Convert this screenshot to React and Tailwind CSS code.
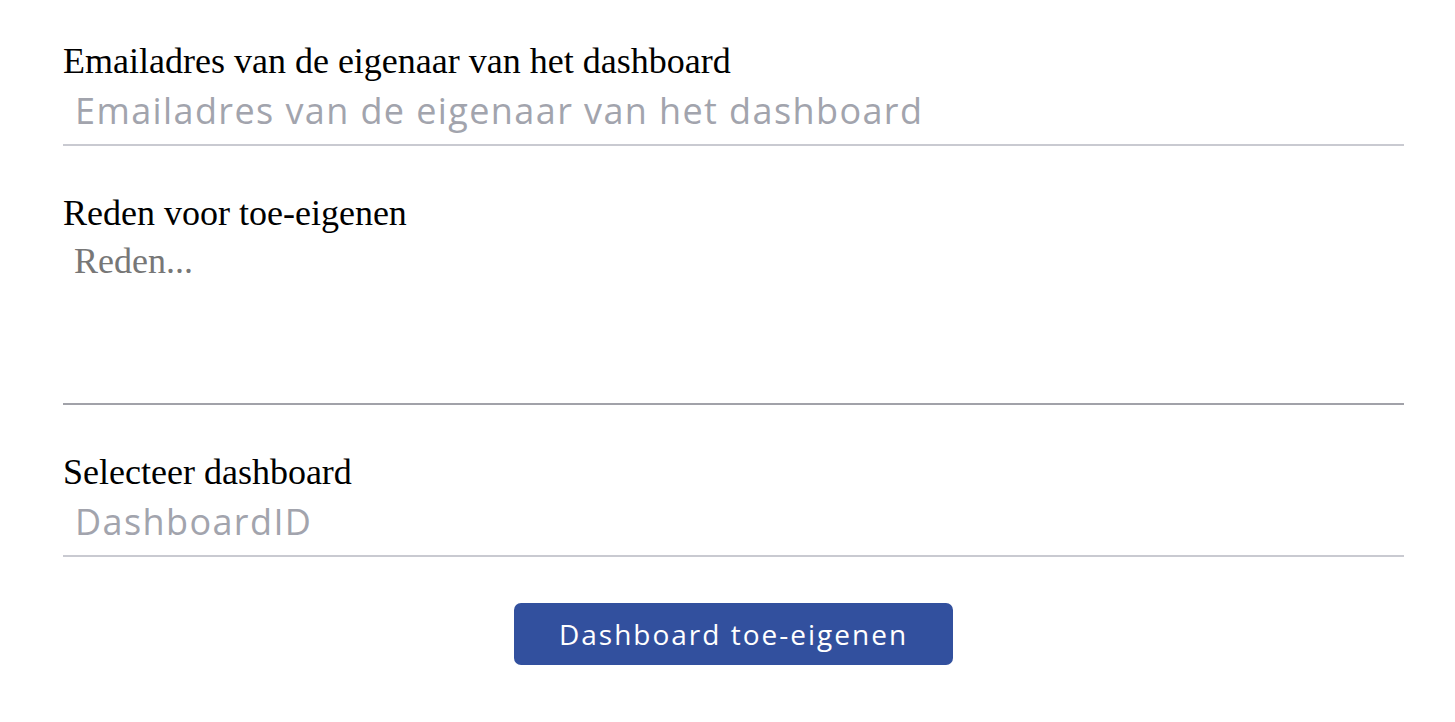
import React from "react";

function Field({ label, children, className = "" }) {
  return (
    <div className={className}>
      <label className="block text-[36px] leading-[40px] text-black font-['Liberation_Serif',serif]">
        {label}
      </label>
      {children}
    </div>
  );
}

export default function App() {
  return (
    <div className="min-h-screen bg-white">
      <form className="ml-[63px] w-[1341px] pt-[41px]">
        <Field label="Emailadres van de eigenaar van het dashboard">
          <input
            type="email"
            placeholder="Emailadres van de eigenaar van het dashboard"
            className="block w-full h-[65px] pl-[12px] pb-[4px] bg-transparent border-b-2 border-[#c9cad1] text-[36px] font-['Open_Sans',sans-serif] tracking-[1.4px] placeholder:text-[#a2a4ad] outline-none"
          />
        </Field>

        <Field label="Reden voor toe-eigenen" className="mt-[47px]">
          <textarea
            placeholder="Reden..."
            className="block w-full h-[172px] pl-[11px] pt-[8px] bg-transparent border-b-2 border-[#a1a2a9] text-[36px] leading-[40px] font-['Liberation_Serif',serif] placeholder:text-[#777777] outline-none resize-none"
          />
        </Field>

        <Field label="Selecteer dashboard" className="mt-[47px]">
          <input
            type="text"
            placeholder="DashboardID"
            className="block w-full h-[65px] pl-[12px] pb-[4px] bg-transparent border-b-2 border-[#c9cad1] text-[36px] font-['Open_Sans',sans-serif] tracking-[1.4px] placeholder:text-[#a2a4ad] outline-none"
          />
        </Field>

        <div className="flex justify-center mt-[46px]">
          <button
            type="button"
            className="w-[439px] h-[62px] rounded-[7px] bg-[#32509e] text-white text-[28px] font-['Open_Sans',sans-serif] tracking-[2px]"
          >
            Dashboard toe-eigenen
          </button>
        </div>
      </form>
    </div>
  );
}
